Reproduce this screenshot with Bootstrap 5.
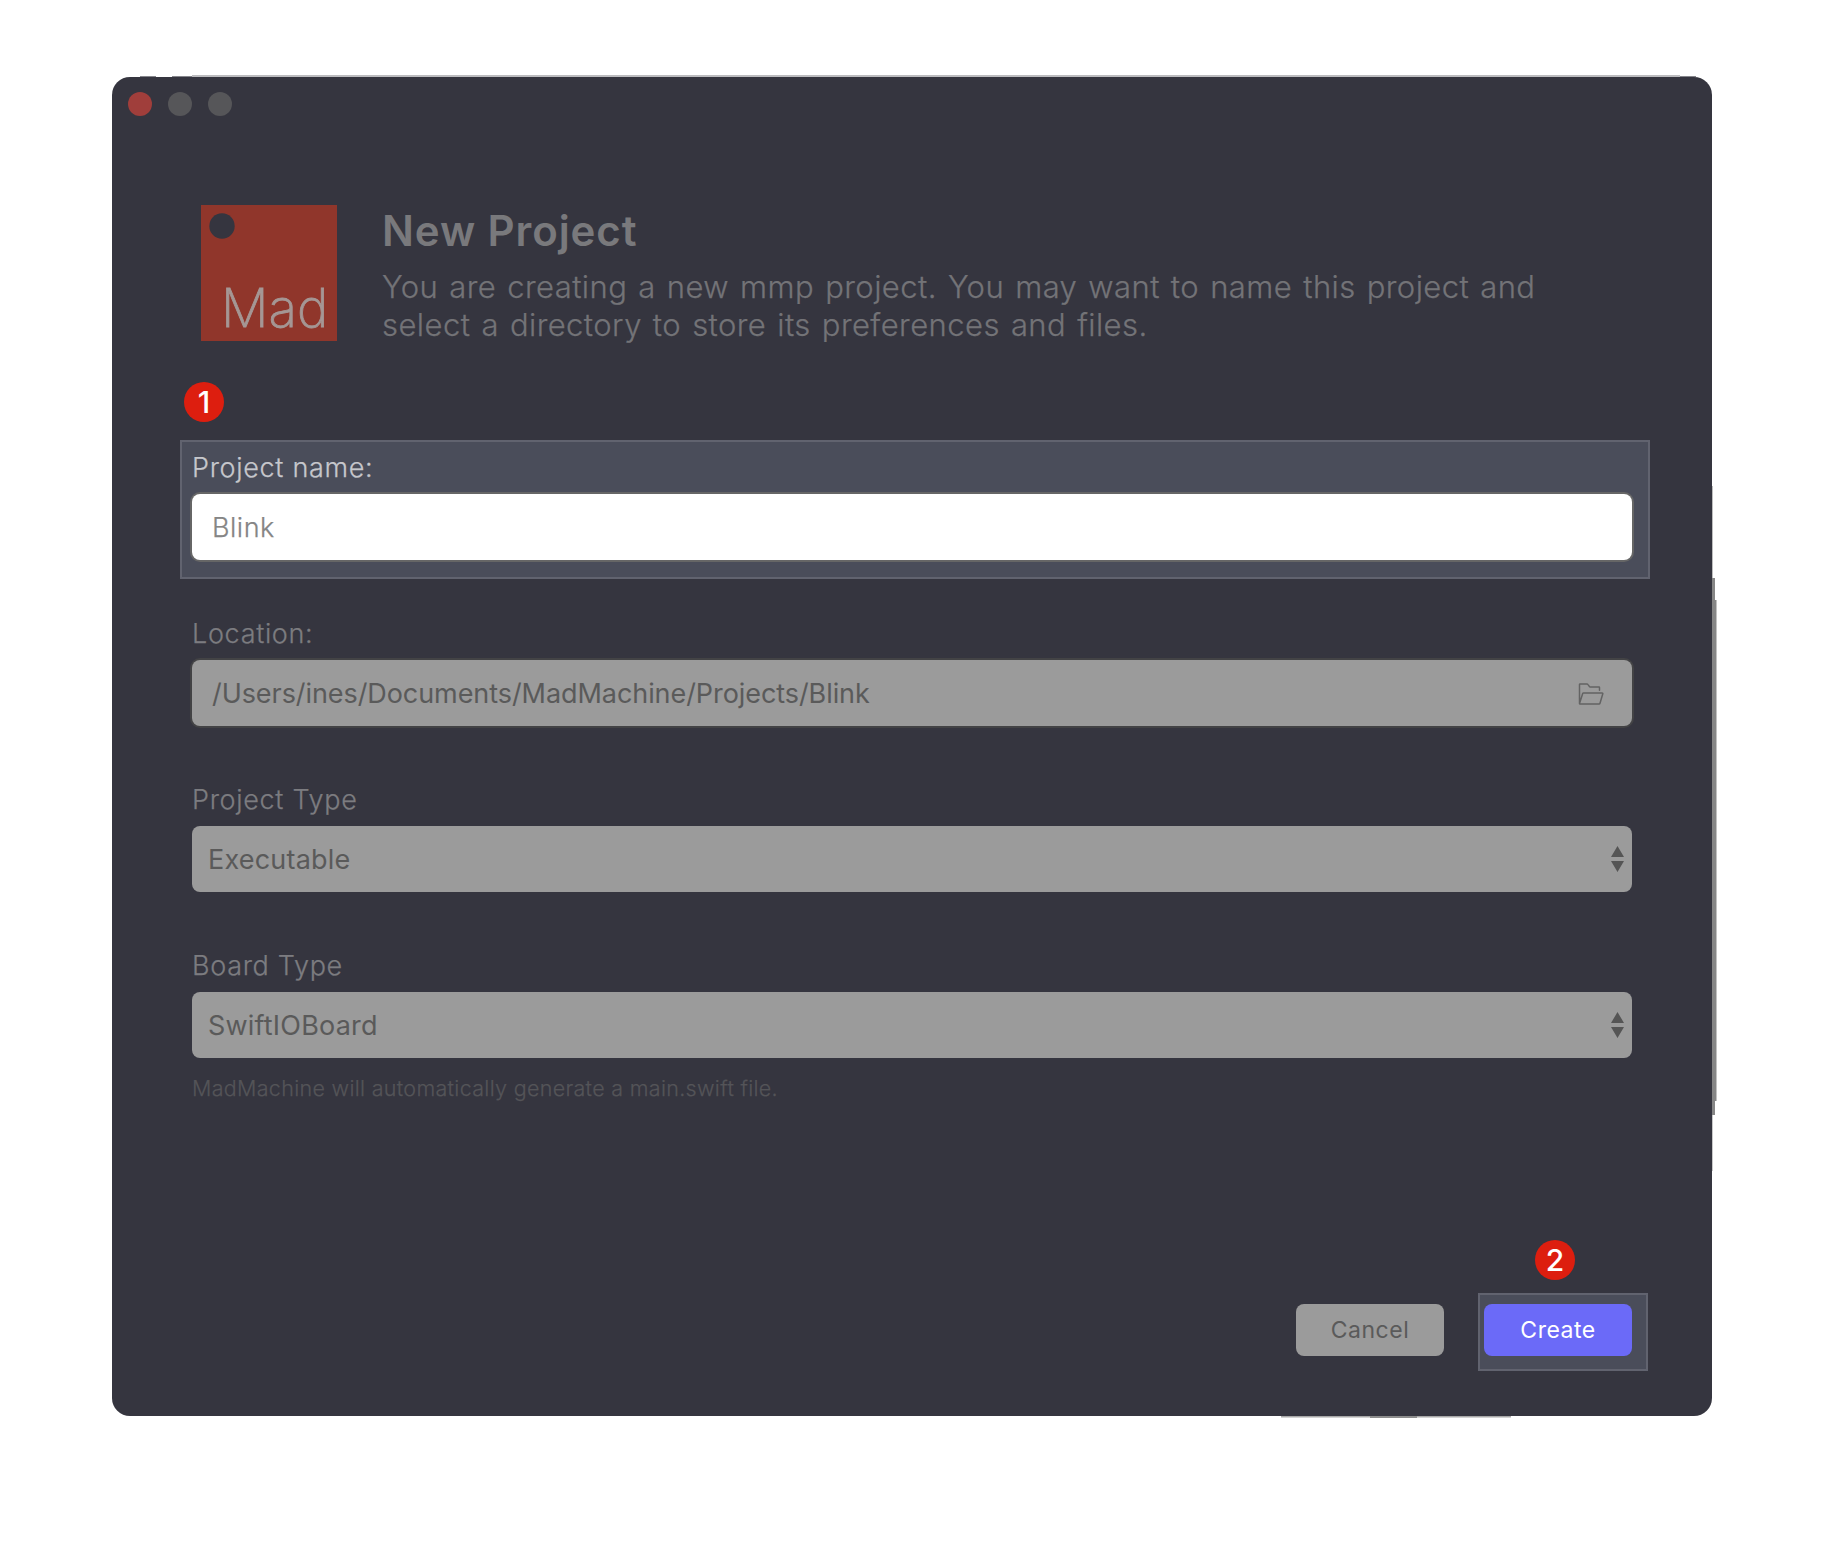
<!DOCTYPE html>
<html lang="en">
<head>
<meta charset="utf-8">
<meta name="viewport" content="width=device-width, initial-scale=1">
<title>New Project</title>
<link href="https://cdn.jsdelivr.net/npm/bootstrap@5.3.0/dist/css/bootstrap.min.css" rel="stylesheet">
<style>
  body { font-family: Inter, "Liberation Sans", sans-serif; background: #fff; }
  .app-window { width: 1600px; height: 1339px; margin: 77px 0 0 112px; background: #35353f; border-radius: 18px; }
  .title-bar { height: 54px; padding-left: 16px; gap: 16px; }
  .light { width: 24px; height: 24px; background: #565659; }
  .light-close { background: #a03e3b; }
  .content { padding: 74px 80px 60px; }
  .intro { height: 136px; padding-left: 9px; gap: 44px; }
  .intro h1 { font-size: 42px; line-height: 52px; font-weight: 600; letter-spacing: .9px; color: #79797c; margin: 0 0 11px 1px; }
  .intro p { font-size: 31px; line-height: 38px; font-weight: 300; letter-spacing: .43px; word-spacing: 1.9px; color: #737377; margin: 0 0 0 1px; }
  .intro p, .field .form-label, .hint { -webkit-text-stroke: .25px currentColor; }
  .project-form { margin-top: 107px; }
  .field { margin-bottom: 54px; }
  .field .form-label { display: block; font-size: 27px; line-height: 40px; font-weight: 300; letter-spacing: .68px; color: #7c7c80; margin: 0 0 6px; }
  .control { height: 66px; border-radius: 8px; background: #9b9b9b; color: #5a5a5a; font-size: 27px; line-height: 64px; padding: 2px 8px 0 18px; }
  .control-input { box-shadow: 0 0 0 2px #434345; padding: 1px 28px 0 20px; letter-spacing: -.07px; }
  .field-select .control { letter-spacing: .2px; padding-left: 16px; }
  .arrows { margin-top: -2px; }
  .spotlight::before { content: ""; position: absolute; background: #4a4d5a; border: 2px solid #61636f; z-index: 0; }
  .spotlight > * { position: relative; z-index: 1; }
  .spot-field::before { inset: -8px -18px -19px -12px; }
  .spot-field .form-label { color: #c6c7cc; }
  .spot-field .control { background: #fff; color: #858585; font-weight: 300; letter-spacing: .5px; box-shadow: 0 0 0 2px #666; padding-top: 2px; -webkit-text-stroke: .25px currentColor; }
  .spot-button::before { inset: -11px -16px -15px -6px; }
  .spotlight > .step { position: absolute; width: 40px; height: 40px; background: #dd1e0f; color: #fff; font-size: 30px; line-height: 40px; font-weight: 500; }
  .spot-field > .step { left: -8px; top: -66px; }
  .spot-button > .step { left: 51px; top: -64px; }
  .hint { font-size: 21.5px; line-height: 30px; font-weight: 300; letter-spacing: .31px; color: #545458; margin-top: -39px; }
  .actions { gap: 40px; }
  .actions .btn { width: 148px; height: 52px; border: 0; border-radius: 8px; padding: 0; font-size: 23px; line-height: 52px; letter-spacing: .5px; }
  .btn-cancel, .btn-cancel:hover { background: #9b9b9b; color: #5a5a5a; }
  .btn-create, .btn-create:hover { background: #6b6af8; color: #fff; }
  .edge { position: absolute; left: 0; top: -2px; }
</style>
<script src="https://cdn.jsdelivr.net/npm/bootstrap@5.3.0/dist/js/bootstrap.bundle.min.js"></script>
</head>
<body class="min-vh-100 d-flex align-items-start">
<div class="app-window position-relative d-flex flex-column flex-shrink-0">
  <!-- worn slivers of shadow around the window -->
  <svg class="edge" width="1606" height="1346" viewBox="0 0 1606 1346" aria-hidden="true">
    <path d="M80 1H1568" stroke="#bcbcbf" stroke-width="2"/>
    <path d="M28 1.500H44M60 1.500H80M1568 1.500H1584" stroke="#85858b" stroke-width="1"/>
    <path d="M1600.500 411v92" stroke="#bdbdbd" stroke-width="1"/>
    <path d="M1600 503h3v22h1.500v501h-1.500v14h-3z" fill="#868686"/>
    <path d="M1600.500 1040v56" stroke="#c8c8c8" stroke-width="1"/>
    <path d="M1169 1341.750H1399" stroke="#a8a8a8" stroke-width="1.500"/>
    <path d="M1258 1342H1305" stroke="#8c8c8c" stroke-width="2"/>
  </svg>
  <div class="title-bar d-flex align-items-center flex-shrink-0">
    <span class="light light-close rounded-circle"></span>
    <span class="light rounded-circle"></span>
    <span class="light rounded-circle"></span>
  </div>
  <main class="content d-flex flex-column flex-grow-1">
    <header class="intro d-flex flex-shrink-0">
      <svg class="flex-shrink-0" width="136" height="136" viewBox="0 0 136 136" role="img">
        <rect width="136" height="136" fill="#90362b"/>
        <circle cx="21" cy="21" r="12.700" fill="#35353f"/>
        <text x="20" y="122" font-family="Inter, sans-serif" font-size="53" font-weight="200" fill="#a59795" stroke="#a59795" stroke-width=".8">Mad</text>
      </svg>
      <div>
        <h1>New Project</h1>
        <p>You are creating a new mmp project. You may want to name this project and<br>select a directory to store its preferences and files.</p>
      </div>
    </header>
    <div class="project-form">
      <div class="field position-relative spotlight spot-field">
        <span class="step rounded-circle text-center">1</span>
        <label class="form-label">Project name:</label>
        <div class="control control-input">Blink</div>
      </div>
      <div class="field">
        <label class="form-label">Location:</label>
        <div class="control control-input d-flex justify-content-between align-items-center">
          <span>/Users/ines/Documents/MadMachine/Projects/Blink</span>
          <svg width="26" height="22" viewBox="0 0 26 22" fill="none" stroke="#636363" stroke-width="1.500" stroke-linejoin="round" stroke-linecap="round"><path d="M1.500 20.500V1.500Q1.500 1 2 1H9Q9.600 1 10 1.600L11.300 3.400Q11.600 3.900 12.200 3.900H21Q21.500 3.900 21.500 4.400V7.200M1.500 20.500L4.700 10.600Q4.900 10 5.500 10H24.200Q25 10 24.800 10.700L22 20.300Q21.800 21 21.100 21H2Q1.500 21 1.500 20.500Z"/></svg>
        </div>
      </div>
      <div class="field field-select">
        <label class="form-label">Project Type</label>
        <div class="control d-flex justify-content-between align-items-center">
          <span>Executable</span>
          <svg class="arrows" width="13" height="26" viewBox="0 0 13 26" fill="#555"><path d="M6.500 0L13 11H0zM0 15H13L6.500 26z"/></svg>
        </div>
      </div>
      <div class="field field-select">
        <label class="form-label">Board Type</label>
        <div class="control d-flex justify-content-between align-items-center">
          <span>SwiftIOBoard</span>
          <svg class="arrows" width="13" height="26" viewBox="0 0 13 26" fill="#555"><path d="M6.500 0L13 11H0zM0 15H13L6.500 26z"/></svg>
        </div>
      </div>
      <div class="hint">MadMachine will automatically generate a main.swift file.</div>
    </div>
    <div class="actions d-flex justify-content-end mt-auto">
      <button type="button" class="btn btn-cancel">Cancel</button>
      <div class="position-relative spotlight spot-button">
        <span class="step rounded-circle text-center">2</span>
        <button type="button" class="btn btn-create">Create</button>
      </div>
    </div>
  </main>
</div>
</body>
</html>
